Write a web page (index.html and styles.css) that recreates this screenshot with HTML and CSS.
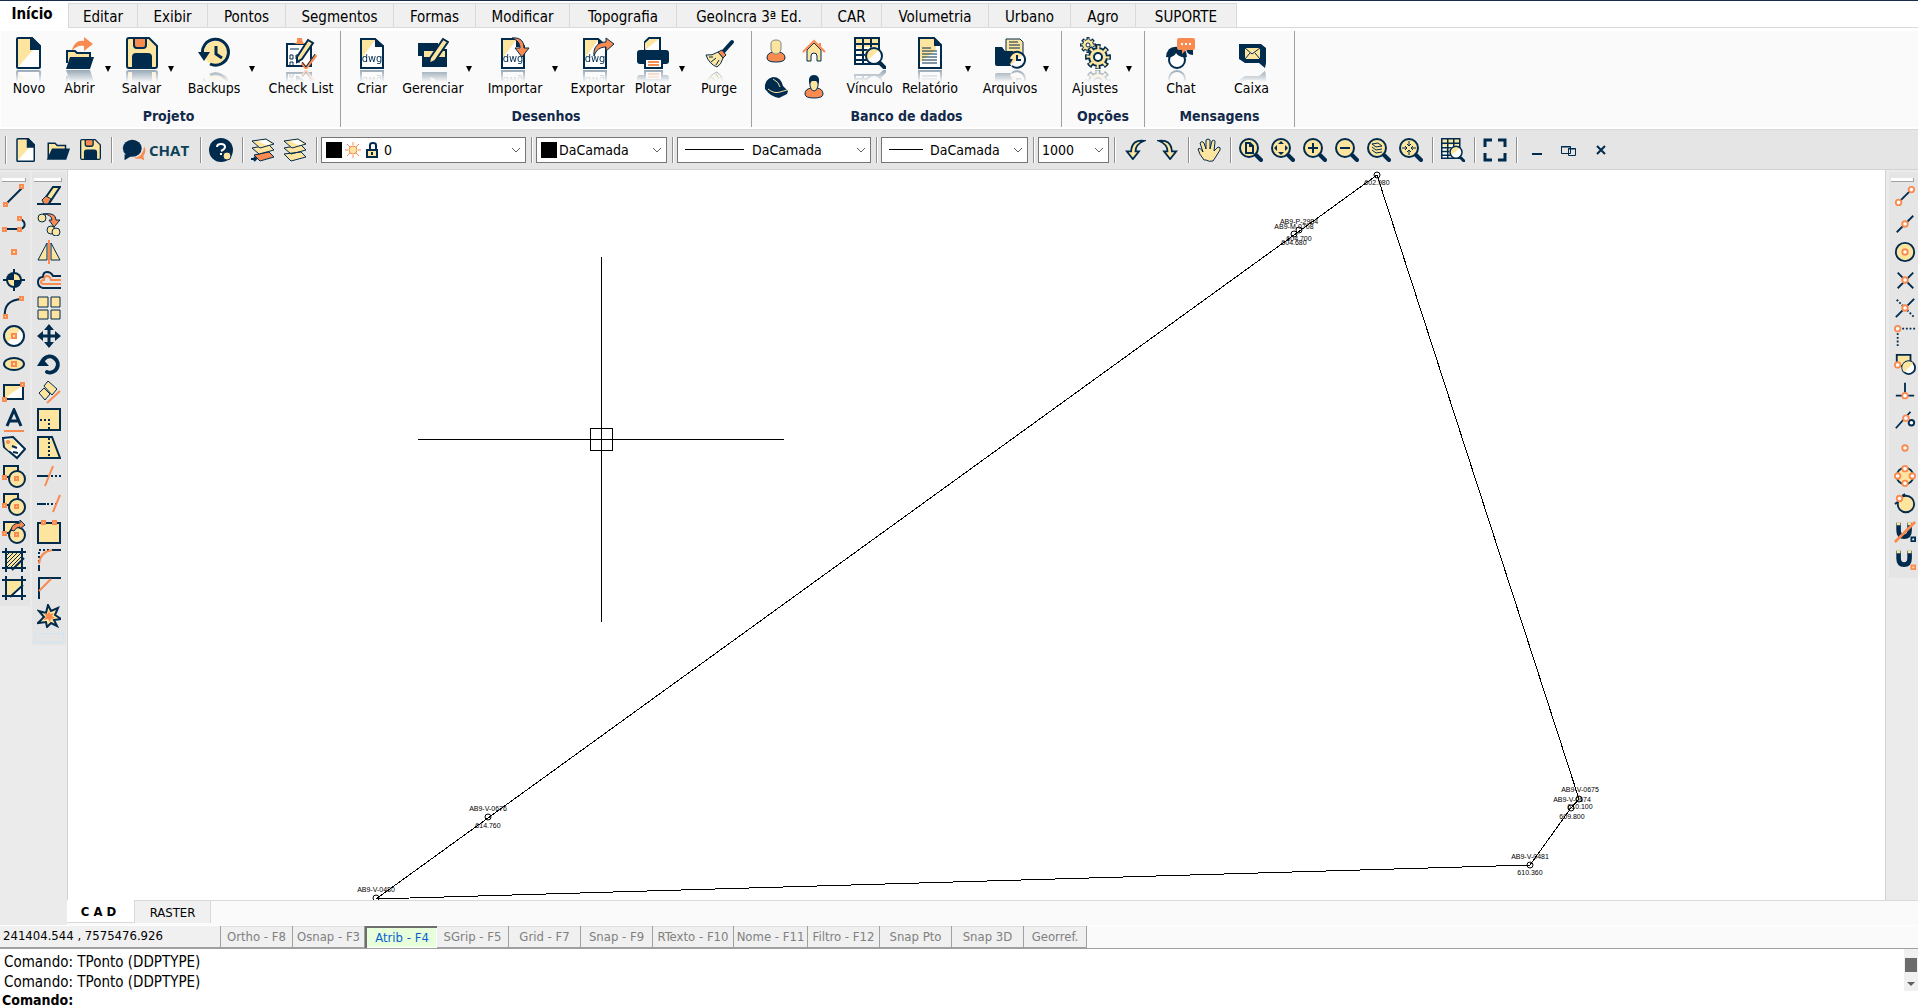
FILE: index.html
```html
<!DOCTYPE html>
<html lang="pt-BR">
<head>
<meta charset="utf-8">
<title>CAD Topografia</title>
<link rel="stylesheet" href="styles.css">
</head>
<body>
<svg class="sprite" aria-hidden="true">
  <defs>
    <symbol id="page" viewBox="0 0 32 32"><path class="w" d="M5 1h14l8 8v22H5z"/><path class="c" d="M5 1h16v11L5 30z"/><path class="ln" d="M5 1h14l8 8v21q0 1-1 1H5q-1 0-1-1V2q0-1 1-1z"/><path class="n" d="M17 0h2l9 9v4H17z"/></symbol>
    <symbol id="folder" viewBox="0 0 32 32"><path class="c s" d="M3 27V7h9l3 3h11v8"/><path class="n" d="M8 14h24l-5 15H1z"/></symbol>
    <symbol id="open" viewBox="0 0 32 32"><path class="o" d="M8 14C9 6 15 3 20 4V0l9 7-9 7v-5c-5-1-9 1-12 5z"/><path class="c s" d="M3 26V14h8l2 2h13v5"/><path class="n" d="M6 20h24l-4 12H2z"/></symbol>
    <symbol id="save" viewBox="0 0 32 32"><path class="c ln" d="M3 1h20l8 8v20q0 2-2 2H3q-2 0-2-2V3q0-2 2-2z"/><path class="o s" d="M8 1h12v7q0 3-3 3h-6q-3 0-3-3z"/><path class="n" d="M6 31V20q0-4 4-4h12q4 0 4 4v11z"/></symbol>
    <symbol id="clock" viewBox="0 0 32 32"><circle class="c" cx="18" cy="16" r="12"/><path class="l3" d="M5 19A13 13 0 1 1 12 27M18 9v8l6 4"/><path class="n" d="M0 15h12l-6 9z"/></symbol>
    <symbol id="check" viewBox="0 0 32 32"><path class="w s" d="M2 7h24v22H2z"/><path class="o" d="M8 7q5 0 4-6h5q0 6 5 6z"/><path class="s2" d="M5 12h9M5 18h3v4H5zM11 18h3v4h-3zM5 25h3v4H5zM11 25h4"/><path class="c s" d="M12 20L23 3l5 3-11 16-5 3z"/><path class="lo3" d="M17 26l4 5L31 18"/><path class="s2" d="M17 25l4 5 9-13"/></symbol>
    <symbol id="dwg" viewBox="0 0 32 32"><path class="w" d="M5 2h14l8 8v21H5z"/><path class="c" d="M5 2h15L5 22z"/><path class="s" d="M5 2h14l8 7v22H5z"/><path class="n" d="M19 1l9 9h-9z"/><text class="dwg" x="16" y="25" text-anchor="middle">dwg</text></symbol>
    <symbol id="manage" viewBox="0 0 32 32"><path class="n" d="M1 6h20v13H1z"/><path class="c s" d="M6 13h23v8H6z"/><path class="n" d="M5 22h25v8H5z"/><path class="c s" d="M13 21L26 2l5 3-13 19-6 3z"/><path class="s2" d="M9 27h6"/></symbol>
    <symbol id="arrowin" viewBox="0 0 32 32"><use href="#dwg" width="32" height="32" x="-2"/><path class="o s2" d="M13 1c9-1 12 4 12 10h5l-7 9-7-9h5c0-5-3-8-8-10z"/></symbol>
    <symbol id="arrowout" viewBox="0 0 32 32"><use href="#dwg" width="32" height="32" x="-3"/><path class="o s2" d="M12 19c-1-9 4-14 12-14V1l8 6-8 7v-4c-6 0-10 3-12 9z"/></symbol>
    <symbol id="print" viewBox="0 0 32 32"><path class="w s" d="M8 14V5l4-4h11v13z"/><path class="c" d="M8 13V6l5-4h9z"/><path class="n" d="M3 13h26q3 0 3 3v8q0 3-3 3H3q-3 0-3-3v-8q0-3 3-3z"/><path class="w s" d="M8 22h17v9H8z"/><path class="lo" d="M11 25h11M11 28h11"/></symbol>
    <symbol id="broom" viewBox="0 0 32 32"><path class="l4" d="M29 5L20 15"/><path class="o s2" d="M15 15l4-2 4 5-3 3z"/><path class="c s2" d="M3 18q6 1 12-3l5 6q-2 7-6 9-8-3-11-12z"/><path class="s2" d="M6 20l4 0M8 25l5-4M13 28l3-5"/></symbol>
    <symbol id="table" viewBox="0 0 32 32"><path class="c" d="M1 1h24v9H1z"/><path class="w" d="M1 10h24v17H1z"/><path class="c" d="M1 1h8v22z"/><path class="s" d="M1 1h24v26H1zM1 7h24M1 13h24M1 18h24M1 23h24M9 1v26M17 1v26"/><circle class="w" cx="20" cy="19" r="8"/><path class="c" d="M13 24a8 8 0 0 1 12-11z"/><circle class="s" cx="20" cy="19" r="8"/><path class="l4" d="M26 26l5 5"/></symbol>
    <symbol id="report" viewBox="0 0 32 32"><path class="w" d="M5 1h17l5 5v25H5z"/><path class="c" d="M5 1h17v12L5 26z"/><path class="ln" d="M5 1h15l7 7v23H5z"/><path class="n" d="M20 0l8 9h-8z"/><path class="s2" d="M8 11h9M8 14h15M8 17h15M8 20h15M8 23h15M8 26h15"/></symbol>
    <symbol id="files" viewBox="0 0 32 32"><path class="c s2" d="M12 12V2h14l3 3v12H12z"/><path class="s2" d="M15 5h9M15 8h11M15 11h11"/><path class="n" d="M1 10h7l3 4h8v15H3q-2 0-2-2z"/><circle class="w" cx="23" cy="23" r="8"/><path class="c" d="M17 28a8 8 0 0 1 12-11z"/><path class="s" d="M15 23a8 8 0 1 1 3 6M23 18v5h4"/><path class="n" d="M12 22h7l-3 5z"/></symbol>
    <symbol id="gears" viewBox="0 0 32 32"><circle class="g1" cx="9" cy="8" r="6" pathLength="80"/><circle class="n" cx="9" cy="8" r="6"/><circle class="g2" cx="9" cy="8" r="5" pathLength="80"/><circle class="c" cx="9" cy="8" r="5"/><circle class="w s2" cx="9" cy="8" r="2"/><circle class="g3" cx="19" cy="20" r="10" pathLength="80"/><circle class="n" cx="19" cy="20" r="10"/><circle class="g4" cx="19" cy="20" r="9" pathLength="80"/><circle class="c" cx="19" cy="20" r="8"/><circle class="w s" cx="19" cy="20" r="4"/></symbol>
    <symbol id="talk" viewBox="0 0 32 32"><path class="n" d="M20 8q9-1 8 7v3q-4 0-6-3z"/><circle class="w s" cx="12" cy="23" r="8"/><path class="n" d="M1 20Q2 8 14 10q8 2 8 10-8 1-11-4-2 5-10 4z"/><path class="o" d="M14 1h14q2 0 2 2v8q0 2-2 2h-7l-4 4v-4h-3q-2 0-2-2V3q0-2 2-2z"/><path class="dots" d="M16 7h10"/></symbol>
    <symbol id="mailbox" viewBox="0 0 32 32"><path class="n" d="M3 7h22l5 4v15l-1 5-6-5H9l-6-4z"/><path class="c" d="M9 11h15v11H9z"/><path class="s2" d="M9 11l7 6 8-6M9 22l5-6M24 22l-5-6"/></symbol>
    <symbol id="person" viewBox="0 0 24 24"><path class="o s2" d="M3 19q0-5 6-6h6q6 1 6 6 0 4-9 4t-9-4z"/><path class="c sg" d="M7 5q0-4 5-4t5 4v5q-1 5-5 5t-5-5z"/></symbol>
    <symbol id="worker" viewBox="0 0 24 24"><path class="o s2" d="M3 19q0-5 6-6h6q6 1 6 6 0 4-9 4t-9-4z"/><path class="c s2" d="M8 5h8v6q-1 5-4 5t-4-5z"/><path class="n" d="M7 9V4q1-4 5-4t5 4v5l-3-3h-4z"/></symbol>
    <symbol id="house" viewBox="0 0 24 24"><path class="c s2" d="M5 11v11h4v-5q0-3 3-3t3 3v5h4V11l-7-7z"/><path class="lo" d="M1 13L12 2l11 11M18 4v4"/></symbol>
    <symbol id="helmet" viewBox="0 0 24 24"><path class="n" d="M1 14Q0 4 9 2q8 0 10 9l5 5-1 3-8 4q-8-1-14-9z"/><path class="lc" d="M4 14q6 5 12 3l7-2M9 4q6 3 7 8"/></symbol>
    <symbol id="bubbles" viewBox="0 0 28 28"><path class="o" d="M14 23q10 0 12-13 3 6-1 11l1 5-5-2q-4 1-7-1z"/><ellipse class="n" cx="12" cy="12" rx="11" ry="10"/><path class="n" d="M3 19l0 7 8-5z"/></symbol>
    <symbol id="help" viewBox="0 0 24 24"><circle class="n" cx="12" cy="12" r="12"/><path class="lw" d="M8 9q0-3 4-3t4 3q0 2-4 4M12 15v2"/><circle class="c s2" cx="18" cy="18" r="4"/><path class="lc" d="M21 21l3 3"/></symbol>
    <symbol id="layers" viewBox="0 0 24 24"><path class="c s2" d="M1 16l7 7 15-4-5-5zM1 10l7 6 15-4-5-5z"/><path class="c s2" d="M1 3l14-2 8 5-14 4z"/><path class="w" d="M7 3l8-1 5 4-5 1z"/></symbol>
    <symbol id="layers1" viewBox="0 0 24 24"><path class="o s2" d="M3 17l6 6 14-4-5-5z"/><path class="c s2" d="M1 10l7 6 15-4-5-5z"/><path class="c s2" d="M1 3l14-2 8 5-14 4z"/><path class="w" d="M7 3l8-1 5 4-5 1z"/><path class="s" d="M0 21h5M3 19l2 2-2 2"/></symbol>
    <symbol id="sun" viewBox="0 0 16 16"><path class="los" d="M8 0v3M8 13v3M0 8h3M13 8h3M2 2l3 3M14 2l-3 3M2 14l3-3M14 14l-3-3"/><circle class="c los" cx="8" cy="8" r="4"/></symbol>
    <symbol id="lock" viewBox="0 0 16 16"><path class="s" d="M6 8V3q0-2 3-2t3 2v4"/><path class="c s" d="M3 8h10v7H3z"/><path class="s" d="M8 10v3"/></symbol>
    <symbol id="undo" viewBox="0 0 24 24"><path class="c s" d="M22 2Q8 0 7 14H2l7 9 7-9h-4Q12 6 22 2z"/></symbol>
    <symbol id="hand" viewBox="0 0 24 24"><path class="c s2" d="M7 22Q2 16 1 11q2-2 5 3L3 5q2-3 4 0l2 6V2q2-2 4 0v9l2-8q3-2 3 1l-1 9 4-4q3 0 2 3l-5 8-2 3q-4 1-7-1z"/></symbol>
    <symbol id="lens" viewBox="0 0 24 24"><circle class="c" cx="10" cy="10" r="9"/><circle class="ln" cx="10" cy="10" r="9"/><path class="l4" d="M17 17l5 5"/></symbol>
    <symbol id="zpage" viewBox="0 0 24 24"><use href="#lens"/><path class="s" d="M7 5h4l3 3v7H7zM11 5v3h3"/></symbol>
    <symbol id="zext" viewBox="0 0 24 24"><use href="#lens"/><path class="n" d="M10 3l3 3H7zM10 17l3-3H7zM3 10l3-3v6zM17 10l-3-3v6z"/></symbol>
    <symbol id="zin" viewBox="0 0 24 24"><use href="#lens"/><path class="ln" d="M5 10h10M10 5v10"/></symbol>
    <symbol id="zout" viewBox="0 0 24 24"><use href="#lens"/><path class="ln" d="M5 10h10"/></symbol>
    <symbol id="zlay" viewBox="0 0 24 24"><use href="#lens"/><path class="s2" d="M5 6l6-1 4 3-6 1zM5 9l4 3 6-1M5 12l4 3 6-1"/></symbol>
    <symbol id="zall" viewBox="0 0 24 24"><use href="#lens"/><path class="s2" d="M10 3v5M10 12v5M3 10h5M12 10h5M8 6l2 2 2-2M8 14l2-2 2 2M6 8l2 2-2 2M14 8l-2 2 2 2"/></symbol>
    <symbol id="full" viewBox="0 0 24 24"><path class="l3" d="M2 9V2h7M15 2h7v7M22 15v7h-7M9 22H2v-7"/></symbol>
    <symbol id="min" viewBox="0 0 24 24"><path class="s" d="M7 16h10"/></symbol>
    <symbol id="restore" viewBox="0 0 24 24"><path class="s2" d="M4.500 8.500h9v7h-9zM11.500 10.500h7v7h-7zM4 9h10M11 11h8"/></symbol>
    <symbol id="close" viewBox="0 0 24 24"><path class="s" d="M8 8l8 8M16 8l-8 8"/></symbol>
    <symbol id="chev" viewBox="0 0 10 10"><path class="sc" d="M1 3l4 4 4-4"/></symbol>

    <symbol id="line" viewBox="0 0 24 24"><path class="ln" d="M4 20L20 4"/><path class="sq" d="M2 19h3v3H2zM18 1h3v3h-3z"/></symbol>
    <symbol id="poly" viewBox="0 0 24 24"><path class="ln" d="M2 17h17q5-2 3-7l-3-3"/><path class="sq" d="M1 16h3v3H1zM16 5h3v3h-3zM16 16h3v3h-3z"/></symbol>
    <symbol id="pt" viewBox="0 0 24 24"><path class="sq" d="M10 10h4v4h-4z"/></symbol>
    <symbol id="target" viewBox="0 0 24 24"><circle class="n" cx="12" cy="12" r="8"/><path class="c" d="M12 12V6a6 6 0 0 1 6 6zM12 12v6a6 6 0 0 1-6-6z"/><path class="s" d="M1 12h4M19 12h4M12 1v4M12 19v4"/></symbol>
    <symbol id="arc" viewBox="0 0 24 24"><path class="ln" d="M3 21Q1 4 20 3"/><path class="sq" d="M2 19h3v3H2zM18 1h3v3h-3z"/></symbol>
    <symbol id="circle" viewBox="0 0 24 24"><circle class="w" cx="12" cy="12" r="10"/><path class="c" d="M5 19A10 10 0 0 1 19 5z"/><circle class="ln" cx="12" cy="12" r="10"/><path class="sq" d="M10 10h4v4h-4z"/></symbol>
    <symbol id="ellipse" viewBox="0 0 24 24"><ellipse class="c" cx="12" cy="12" rx="10" ry="6"/><ellipse class="ln" cx="12" cy="12" rx="10" ry="6"/><path class="sq" d="M10 10h4v4h-4z"/></symbol>
    <symbol id="rect" viewBox="0 0 24 24"><path class="w" d="M2 5h19v14H2z"/><path class="c" d="M2 5h19L2 19z"/><path class="ln" d="M2 5h19v14H2z"/><path class="sq" d="M1 18h3v3H1zM19 3h3v3h-3z"/></symbol>
    <symbol id="text" viewBox="0 0 24 24"><path class="l3" d="M5 18L12 2l7 16M8 13h8"/><path class="lo" d="M2 23h20"/></symbol>
    <symbol id="tag" viewBox="0 0 24 24"><path class="w s" d="M1 2l10-1 12 12-8 9L2 11z"/><path class="c" d="M3 4l8-1 5 5-9 7-4-4z"/><path class="ln" d="M10 10l5 2M11 16l5 1"/><circle class="o" cx="6" cy="6" r="2"/></symbol>
    <symbol id="shapes" viewBox="0 0 24 24"><path class="c s" d="M2 2h14v11H2z"/><circle class="c s" cx="15" cy="15" r="8"/><path class="sq" d="M1 12h3v3H1zM13 13h3v3h-3z"/></symbol>
    <symbol id="shapesx" viewBox="0 0 24 24"><use href="#shapes"/><path class="o s2" d="M9 10q1-7 9-7V0l5 5-5 4V7q-4 0-6 4z"/></symbol>
    <symbol id="crop" viewBox="0 0 24 24"><path class="w" d="M4 4h16v16H4z"/><path class="c" d="M4 4h16v4L8 20H4z"/><path class="ln" d="M0 4h24M0 20h24M4 0v24M20 0v24M8 21L21 9"/></symbol>
    <symbol id="hatch" viewBox="0 0 24 24"><path class="c" d="M4 4h16v16H4z"/><path class="s2" d="M4 8l4-4M4 12l8-8M4 16L16 4M4 20L20 4M8 20L20 8M12 20l8-8"/><path class="ln" d="M0 4h24M0 20h24M4 0v24M20 0v24M10 22L22 10"/></symbol>
    <symbol id="erase" viewBox="0 0 24 24"><path class="s" d="M0 20h24"/><path class="c s" d="M9 13l7-10h7L13 18z"/><path class="o s2" d="M9 12l5 3-3 5H7l-2-4z"/></symbol>
    <symbol id="copy" viewBox="0 0 24 24"><circle class="c s2" cx="5" cy="6" r="4"/><circle class="c s2" cx="14" cy="18" r="4"/><circle class="c s2" cx="19" cy="20" r="4"/><path class="o s2" d="M6 2q13-2 13 6h4l-6 7-5-7h3q-1-6-9-6z"/></symbol>
    <symbol id="mirror" viewBox="0 0 24 24"><path class="c s2" d="M10 3v17H1zM14 3v17h9z"/><path class="lo" d="M12 0v24"/></symbol>
    <symbol id="offset" viewBox="0 0 24 24"><path class="ln" d="M24 8h-8q-2-4-6-4T6 9q-5 0-5 5t5 6h18"/><path class="lo1" d="M24 12H14q-1-4-4-4t-3 4q-3 0-3 2t3 2h17"/></symbol>
    <symbol id="array" viewBox="0 0 24 24"><path class="c s2" d="M1 1h10v10H1zM14 1h9v10h-9zM1 14h10v9H1zM14 14h9v9h-9z"/></symbol>
    <symbol id="move" viewBox="0 0 24 24"><path class="l3" d="M12 4v16M4 12h16"/><path class="n" d="M12 0l5 6H7zM12 24l5-6H7zM0 12l6-5v10zM24 12l-6-5v10z"/></symbol>
    <symbol id="rotate" viewBox="0 0 24 24"><path class="l4" d="M7 7A8 8 0 1 1 10 20"/><path class="n" d="M0 14L5 6l7 8z"/></symbol>
    <symbol id="align" viewBox="0 0 24 24"><path class="c s2" d="M2 13l5-5 6 6-5 6zM7 6l4-5 9 8-5 6z"/><path class="lo" d="M10 23L23 11"/></symbol>
    <symbol id="scale" viewBox="0 0 24 24"><path class="c s" d="M1 1h22v21H1z"/><path class="da" d="M3 12h9v9"/></symbol>
    <symbol id="stretch" viewBox="0 0 24 24"><path class="c s" d="M1 1h14l8 21H1z"/><path class="da" d="M12 2v20"/></symbol>
    <symbol id="trim" viewBox="0 0 24 24"><path class="s" d="M0 12h12"/><path class="da" d="M14 12h10"/><path class="lo" d="M8 22L16 2"/></symbol>
    <symbol id="extend" viewBox="0 0 24 24"><path class="s" d="M0 12h9"/><path class="da" d="M10 12h9"/><path class="lo" d="M16 20L23 3"/></symbol>
    <symbol id="break" viewBox="0 0 24 24"><path class="c s" d="M1 3h22v20H1z"/><path class="sq" d="M5 1h3v3H5zM16 1h3v3h-3z"/></symbol>
    <symbol id="fillet" viewBox="0 0 24 24"><path class="da" d="M2 14V2h12"/><path class="ln" d="M2 23v-6M15 2h9"/><path class="lo" d="M2 16Q3 4 15 2"/></symbol>
    <symbol id="chamfer" viewBox="0 0 24 24"><path class="ln" d="M2 23V2h22"/><path class="lo" d="M2 15L14 3"/></symbol>
    <symbol id="burst" viewBox="0 0 24 24"><path class="c s" d="M11 1l3 6 7-3-3 7 6 4-7 1 3 6-6-3-4 4-1-5-8 1 6-6-5-6 7 2z"/><path class="o" d="M12 6l1 4 4-1-2 3 3 2-4 1-1 3-2-3-4 1 2-4-2-3 4 1z"/></symbol>

    <symbol id="r-end" viewBox="0 0 24 24"><path class="s" d="M5 19L19 5"/><circle class="so" cx="5" cy="19" r="3"/><circle class="so" cx="19" cy="5" r="3"/></symbol>
    <symbol id="r-mid" viewBox="0 0 24 24"><path class="s" d="M3 21L21 3"/><circle class="so" cx="12" cy="12" r="3"/></symbol>
    <symbol id="r-cen" viewBox="0 0 24 24"><circle class="c s" cx="12" cy="12" r="10"/><circle class="so" cx="12" cy="12" r="3"/></symbol>
    <symbol id="r-int" viewBox="0 0 24 24"><path class="s" d="M4 4l17 17M21 4L4 21"/><circle class="so" cx="12" cy="12" r="3"/></symbol>
    <symbol id="r-app" viewBox="0 0 24 24"><path class="da" d="M3 3l19 19"/><path class="s" d="M22 2L2 22"/><circle class="so" cx="12" cy="12" r="3"/></symbol>
    <symbol id="r-ext" viewBox="0 0 24 24"><path class="da" d="M9 4h15M4 9v15"/><circle class="so" cx="4" cy="4" r="3"/></symbol>
    <symbol id="r-ins" viewBox="0 0 24 24"><path class="c s" d="M3 2h15v12H3z"/><circle class="w s" cx="16" cy="16" r="7"/><path class="c" d="M11 21A7 7 0 0 1 21 11z"/><circle class="so" cx="4" cy="13" r="3"/></symbol>
    <symbol id="r-per" viewBox="0 0 24 24"><path class="s" d="M2 16h20M12 2v14"/><circle class="so" cx="12" cy="16" r="3"/></symbol>
    <symbol id="r-tan" viewBox="0 0 24 24"><path class="s" d="M2 21L18 3"/><circle class="w s" cx="19" cy="15" r="3"/><circle class="so" cx="13" cy="10" r="3"/></symbol>
    <symbol id="r-node" viewBox="0 0 24 24"><circle class="so" cx="12" cy="12" r="3"/></symbol>
    <symbol id="r-qua" viewBox="0 0 24 24"><circle class="c s" cx="12" cy="12" r="9"/><circle class="so" cx="12" cy="4" r="3"/><circle class="so" cx="12" cy="20" r="3"/><circle class="so" cx="4" cy="12" r="3"/><circle class="so" cx="20" cy="12" r="3"/></symbol>
    <symbol id="r-near" viewBox="0 0 24 24"><circle class="c s" cx="13" cy="12" r="9"/><path class="s" d="M1 12l4-3M9 3l3-2"/><circle class="so" cx="6" cy="6" r="3"/></symbol>
    <symbol id="r-mag" viewBox="0 0 24 24"><path class="l5" d="M5 2v8q0 7 6 7t6-7V2"/><path class="lc3" d="M3 3h4M15 3h4"/><path class="sq" d="M19 18h4v4h-4z"/></symbol>
    <symbol id="r-off" viewBox="0 0 24 24"><path class="l5" d="M5 2v8q0 7 6 7t6-7V2"/><path class="lc3" d="M3 3h4M15 3h4"/><path class="w s" d="M19 18h4v4h-4z"/><path class="lo3" d="M1 23L23 1"/></symbol>
  </defs>
</svg>

<header class="top">
  <nav class="tabs" aria-label="Menu">
    <button class="tab on">Início</button><button class="tab">Editar</button><button class="tab">Exibir</button><button class="tab">Pontos</button><button class="tab">Segmentos</button><button class="tab">Formas</button><button class="tab">Modificar</button><button class="tab">Topografia</button><button class="tab">GeoIncra 3ª Ed.</button><button class="tab">CAR</button><button class="tab">Volumetria</button><button class="tab">Urbano</button><button class="tab">Agro</button><button class="tab">SUPORTE</button>
  </nav>
  <div class="ribbon">
    <section class="group g-projeto">
      <div class="items">
        <button class="big"><span class="ic"><svg><use href="#page"/></svg></span>Novo</button>
        <button class="big"><span class="ic"><svg><use href="#open"/></svg></span>Abrir</button>
        <button class="drop" aria-label="Mais opções de Abrir"></button>
        <button class="big"><span class="ic"><svg><use href="#save"/></svg></span>Salvar</button>
        <button class="drop" aria-label="Mais opções de Salvar"></button>
        <button class="big"><span class="ic"><svg><use href="#clock"/></svg></span>Backups</button>
        <button class="drop" aria-label="Mais opções de Backups"></button>
        <button class="big"><span class="ic"><svg><use href="#check"/></svg></span>Check List</button>
      </div>
      <h2>Projeto</h2>
    </section>
    <section class="group g-desenhos">
      <div class="items">
        <button class="big"><span class="ic"><svg><use href="#dwg"/></svg></span>Criar</button>
        <button class="big"><span class="ic"><svg><use href="#manage"/></svg></span>Gerenciar</button>
        <button class="drop" aria-label="Mais opções de Gerenciar"></button>
        <button class="big"><span class="ic"><svg><use href="#arrowin"/></svg></span>Importar</button>
        <button class="drop" aria-label="Mais opções de Importar"></button>
        <button class="big"><span class="ic"><svg><use href="#arrowout"/></svg></span>Exportar</button>
        <button class="big"><span class="ic"><svg><use href="#print"/></svg></span>Plotar</button>
        <button class="drop" aria-label="Mais opções de Plotar"></button>
        <button class="big"><span class="ic"><svg><use href="#broom"/></svg></span>Purge</button>
      </div>
      <h2>Desenhos</h2>
    </section>
    <section class="group g-banco">
      <div class="items">
        <div class="small">
          <button aria-label="Proprietário"><svg><use href="#person"/></svg></button>
          <button aria-label="Imóvel"><svg><use href="#house"/></svg></button>
          <button aria-label="Responsável"><svg><use href="#helmet"/></svg></button>
          <button aria-label="Técnico"><svg><use href="#worker"/></svg></button>
        </div>
        <button class="big"><span class="ic"><svg><use href="#table"/></svg></span>Vínculo</button>
        <button class="big"><span class="ic"><svg><use href="#report"/></svg></span>Relatório</button>
        <button class="drop" aria-label="Mais opções de Relatório"></button>
        <button class="big"><span class="ic"><svg><use href="#files"/></svg></span>Arquivos</button>
        <button class="drop" aria-label="Mais opções de Arquivos"></button>
      </div>
      <h2>Banco de dados</h2>
    </section>
    <section class="group g-opcoes">
      <div class="items">
        <button class="big"><span class="ic"><svg><use href="#gears"/></svg></span>Ajustes</button>
        <button class="drop" aria-label="Mais opções de Ajustes"></button>
      </div>
      <h2>Opções</h2>
    </section>
    <section class="group g-mensagens">
      <div class="items">
        <button class="big"><span class="ic"><svg><use href="#talk"/></svg></span>Chat</button>
        <button class="big"><span class="ic"><svg><use href="#mailbox"/></svg></span>Caixa</button>
      </div>
      <h2>Mensagens</h2>
    </section>
  </div>
</header>

<div class="toolbar" role="toolbar" aria-label="Barra padrão">
  <i class="sep grip"></i>
  <button class="tb" aria-label="Novo"><svg><use href="#page"/></svg></button>
  <button class="tb" aria-label="Abrir"><svg><use href="#folder"/></svg></button>
  <button class="tb save" aria-label="Salvar"><svg><use href="#save"/></svg></button>
  <i class="sep"></i>
  <button class="chat"><svg><use href="#bubbles"/></svg>CHAT</button>
  <i class="sep"></i>
  <button class="tb" aria-label="Ajuda"><svg><use href="#help"/></svg></button>
  <i class="sep"></i>
  <button class="tb" aria-label="Camada atual"><svg><use href="#layers1"/></svg></button>
  <button class="tb" aria-label="Camadas"><svg><use href="#layers"/></svg></button>
  <i class="sep"></i>
  <div class="combo c-layer"><i class="swatch"></i><svg class="mini"><use href="#sun"/></svg><svg class="mini"><use href="#lock"/></svg><select aria-label="Camada"><option>0</option></select><svg class="chev"><use href="#chev"/></svg></div>
  <i class="sep"></i>
  <div class="combo c-color"><i class="swatch"></i><select aria-label="Cor"><option>DaCamada</option></select><svg class="chev"><use href="#chev"/></svg></div>
  <i class="sep"></i>
  <div class="combo c-type"><i class="rule"></i><select aria-label="Tipo de linha"><option>DaCamada</option></select><svg class="chev"><use href="#chev"/></svg></div>
  <i class="sep"></i>
  <div class="combo c-weight"><i class="rule"></i><select aria-label="Espessura"><option>DaCamada</option></select><svg class="chev"><use href="#chev"/></svg></div>
  <i class="sep"></i>
  <div class="combo c-scale"><select aria-label="Escala"><option>1000</option></select><svg class="chev"><use href="#chev"/></svg></div>
  <i class="sep"></i>
  <button class="tb sm" aria-label="Desfazer"><svg><use href="#undo"/></svg></button>
  <button class="tb sm flip" aria-label="Refazer"><svg><use href="#undo"/></svg></button>
  <i class="sep"></i>
  <button class="tb" aria-label="Mover vista"><svg><use href="#hand"/></svg></button>
  <i class="sep"></i>
  <button class="tb" aria-label="Zoom página"><svg><use href="#zpage"/></svg></button>
  <button class="tb" aria-label="Zoom extensão"><svg><use href="#zext"/></svg></button>
  <button class="tb" aria-label="Mais zoom"><svg><use href="#zin"/></svg></button>
  <button class="tb" aria-label="Menos zoom"><svg><use href="#zout"/></svg></button>
  <button class="tb" aria-label="Zoom camada"><svg><use href="#zlay"/></svg></button>
  <button class="tb" aria-label="Zoom centro"><svg><use href="#zall"/></svg></button>
  <i class="sep"></i>
  <button class="tb" aria-label="Pesquisar tabela"><svg><use href="#table"/></svg></button>
  <i class="sep"></i>
  <button class="tb" aria-label="Tela cheia"><svg><use href="#full"/></svg></button>
  <i class="sep"></i>
  <button class="tb" aria-label="Minimizar"><svg><use href="#min"/></svg></button>
  <button class="tb" aria-label="Restaurar"><svg><use href="#restore"/></svg></button>
  <button class="tb" aria-label="Fechar"><svg><use href="#close"/></svg></button>
</div>

<main class="work">
  <div class="side draw" role="toolbar" aria-label="Desenhar">
    <button aria-label="Linha"><svg><use href="#line"/></svg></button>
    <button aria-label="Polilinha"><svg><use href="#poly"/></svg></button>
    <button aria-label="Ponto"><svg><use href="#pt"/></svg></button>
    <button aria-label="Alvo"><svg><use href="#target"/></svg></button>
    <button aria-label="Arco"><svg><use href="#arc"/></svg></button>
    <button aria-label="Círculo"><svg><use href="#circle"/></svg></button>
    <button aria-label="Elipse"><svg><use href="#ellipse"/></svg></button>
    <button aria-label="Retângulo"><svg><use href="#rect"/></svg></button>
    <button aria-label="Texto"><svg><use href="#text"/></svg></button>
    <button aria-label="Atributo"><svg><use href="#tag"/></svg></button>
    <button aria-label="Criar bloco"><svg><use href="#shapes"/></svg></button>
    <button aria-label="Inserir bloco"><svg><use href="#shapes"/></svg></button>
    <button aria-label="Exportar bloco"><svg><use href="#shapesx"/></svg></button>
    <button aria-label="Hachura"><svg><use href="#hatch"/></svg></button>
    <button aria-label="Recorte"><svg><use href="#crop"/></svg></button>
  </div>
  <div class="side modify" role="toolbar" aria-label="Modificar">
    <button aria-label="Apagar"><svg><use href="#erase"/></svg></button>
    <button aria-label="Copiar"><svg><use href="#copy"/></svg></button>
    <button aria-label="Espelhar"><svg><use href="#mirror"/></svg></button>
    <button aria-label="Paralela"><svg><use href="#offset"/></svg></button>
    <button aria-label="Matriz"><svg><use href="#array"/></svg></button>
    <button aria-label="Mover"><svg><use href="#move"/></svg></button>
    <button aria-label="Girar"><svg><use href="#rotate"/></svg></button>
    <button aria-label="Alinhar"><svg><use href="#align"/></svg></button>
    <button aria-label="Escalar"><svg><use href="#scale"/></svg></button>
    <button aria-label="Esticar"><svg><use href="#stretch"/></svg></button>
    <button aria-label="Aparar"><svg><use href="#trim"/></svg></button>
    <button aria-label="Estender"><svg><use href="#extend"/></svg></button>
    <button aria-label="Quebrar"><svg><use href="#break"/></svg></button>
    <button aria-label="Concordar"><svg><use href="#fillet"/></svg></button>
    <button aria-label="Chanfrar"><svg><use href="#chamfer"/></svg></button>
    <button aria-label="Explodir"><svg><use href="#burst"/></svg></button>
    <i class="hot"></i>
  </div>
  <div class="canvas">
    <svg class="drawing" role="img" aria-label="Desenho do perímetro">
      <g transform="translate(-68 -170)">
        <g class="geo">
          <path d="M376 899L1377 175L1579 799L1571 808L1530 865L376 899"/>
          <path d="M601 257V622M418 439H784M590 428H612V450H590z"/>
        </g>
        <g class="node">
          <circle cx="376" cy="898" r="3"/><circle cx="488" cy="817" r="3"/><circle cx="1294" cy="234" r="3"/><circle cx="1299" cy="230" r="3"/><circle cx="1377" cy="175" r="3"/><circle cx="1579" cy="799" r="3"/><circle cx="1571" cy="808" r="3"/><circle cx="1530" cy="865" r="3"/>
        </g>
        <g class="tag">
          <text x="1299" y="224">AB9-P-2984</text><text x="1294" y="229">AB9-M-0708</text><text x="1299" y="241">604.700</text><text x="1294" y="245">604.680</text><text x="1377" y="185">602.980</text>
          <text x="488" y="811">AB9-V-0676</text><text x="488" y="828">614.760</text><text x="376" y="892">AB9-V-0480</text>
          <text x="1580" y="792">AB9-V-0675</text><text x="1572" y="802">AB9-V-0674</text><text x="1580" y="809">610.100</text><text x="1572" y="819">609.800</text>
          <text x="1530" y="859">AB9-V-0481</text><text x="1530" y="875">610.360</text>
        </g>
      </g>
    </svg>
  </div>
  <div class="side snap" role="toolbar" aria-label="Osnap">
    <button aria-label="Extremo"><svg><use href="#r-end"/></svg></button>
    <button aria-label="Meio"><svg><use href="#r-mid"/></svg></button>
    <button aria-label="Centro"><svg><use href="#r-cen"/></svg></button>
    <button aria-label="Interseção"><svg><use href="#r-int"/></svg></button>
    <button aria-label="Interseção aparente"><svg><use href="#r-app"/></svg></button>
    <button aria-label="Extensão"><svg><use href="#r-ext"/></svg></button>
    <button aria-label="Inserção"><svg><use href="#r-ins"/></svg></button>
    <button aria-label="Perpendicular"><svg><use href="#r-per"/></svg></button>
    <button aria-label="Tangente"><svg><use href="#r-tan"/></svg></button>
    <button aria-label="Nó"><svg><use href="#r-node"/></svg></button>
    <button aria-label="Quadrante"><svg><use href="#r-qua"/></svg></button>
    <button aria-label="Próximo"><svg><use href="#r-near"/></svg></button>
    <button aria-label="Desligar snap"><svg><use href="#r-off"/></svg></button>
    <button aria-label="Configurar snap"><svg><use href="#r-mag"/></svg></button>
  </div>
</main>

<div class="views"><button class="view on">C A D</button><button class="view">RASTER</button></div>

<div class="status">
  <output class="coord">241404.544 , 7575476.926</output><button>Ortho - F8</button><button>Osnap - F3</button><button class="on">Atrib - F4</button><button>SGrip - F5</button><button>Grid - F7</button><button>Snap - F9</button><button>RTexto - F10</button><button>Nome - F11</button><button>Filtro - F12</button><button>Snap Pto</button><button>Snap 3D</button><button>Georref.</button>
</div>

<footer class="console">
  <div class="log"><p>Comando: TPonto (DDPTYPE)</p><p>Comando: TPonto (DDPTYPE)</p>
  <div class="prompt"><label for="cmd">Comando:</label><input id="cmd" type="text"></div></div>
  <div class="scroll" aria-hidden="true"><i class="thumb"></i><i class="down"></i></div>
</footer>
</body>
</html>
```
FILE: styles.css
```css
:root {
  --navy: #002b4d;
  --cream: #fde5a0;
  --orange: #f98b50;
  --edge: #d9d9d9;
  --gray: #a0a0a0;
}
* { box-sizing: border-box; }
body {
  margin: 0;
  min-height: 100vh;
  display: flex;
  flex-direction: column;
  background: #ebebeb;
  color: #000;
  font-family: "DejaVu Sans Condensed", "Noto Sans", sans-serif;
  font-size: 14px;
}
button, select, input { font: inherit; color: inherit; }
button { border: 0; padding: 0; margin: 0; background: none; white-space: nowrap; }
h2, p { margin: 0; }
i { display: block; }
svg { display: block; }
.sprite { position: absolute; width: 0; height: 0; }

/* icon paints */
.n { fill: var(--navy); }
.c { fill: var(--cream); }
.w { fill: #fff; }
.o { fill: var(--orange); }
.s, .s2, .ln, .l3, .l4, .l5, .da { stroke: var(--navy); stroke-width: 2; }
.s:not(.c, .w, .o), .s2:not(.c, .w, .o), .ln:not(.c, .w, .o), .l3, .l4, .l5, .da { fill: none; }
.s2 { stroke-width: 1; }
.l3 { stroke-width: 3; }
.l4 { stroke-width: 4; stroke-linecap: round; }
.l5 { stroke-width: 5; }
.da { stroke-dasharray: 2 2; }
.sg { stroke: #7c8a86; stroke-width: 1; }
.lo, .lo1, .lo3, .los { stroke: var(--orange); stroke-width: 2; }
.lo, .lo1, .lo3, .los:not(.c) { fill: none; }
.lo3 { stroke-width: 3; }
.los { stroke-width: 1; }
.lc, .lc3 { fill: none; stroke: var(--cream); stroke-width: 1; }
.lc3 { stroke-width: 3; }
.lw { fill: none; stroke: #fff; stroke-width: 2; }
.sc { fill: none; stroke: #606060; stroke-width: 1; }
.sq { fill: var(--cream); stroke: var(--orange); stroke-width: 2; }
.so { fill: #fff; stroke: var(--orange); stroke-width: 2; }
.g1, .g2, .g3, .g4 { fill: none; stroke-dasharray: 6 4; stroke-dashoffset: 3; }
.g1 { stroke: var(--navy); stroke-width: 4; }
.g2 { stroke: var(--cream); stroke-width: 3; stroke-dasharray: 3 7; stroke-dashoffset: 1; }
.g3 { stroke: var(--navy); stroke-width: 6; }
.g4 { stroke: var(--cream); stroke-width: 5; stroke-dasharray: 3 7; stroke-dashoffset: 1; }
.dots { fill: none; stroke: #fff; stroke-width: 2; stroke-dasharray: 2 2; }
.dwg { font: 11px "DejaVu Sans Condensed", sans-serif; fill: var(--navy); }

/* menu tabs */
.top { background: #fff; border-top: 1px solid #1a2b50; border-bottom: 1px solid var(--edge); }
.tabs {
  display: grid;
  grid-template-columns: 69px 69px 70px 78px 108px 82px 94px 107px 145px 60px 107px 82px 65px 101px 1fr;
  height: 27px;
  padding-top: 2px;
  box-shadow: inset 0 -1px var(--edge);
  font-size: 15px;
}
.tab { background: #f0f0f0; border: 1px solid var(--edge); border-left: 0; padding-top: 2px; line-height: 20px; }
.tab.on { background: #fff; border-top: 0; border-bottom: 0; font-weight: bold; line-height: 18px; padding: 0 4px 3px 0; }

/* ribbon */
.ribbon { display: flex; margin: 3px 0 2px 1px; background: #fafafa; }
.group { border-right: 1px solid var(--gray); padding-top: 6px; height: 96px; }
.group h2 { font-size: 14px; line-height: 20px; color: #12294a; text-align: center; }
.items { display: grid; height: 69px; }
.g-projeto .items { grid-template-columns: 56px 45px 16px 47px 17px 64px 16px 78px; }
.g-projeto h2 { padding-right: 4px; }
.g-desenhos .items { grid-template-columns: 62px 60px 18px 68px 16px 65px 46px 16px 54px; padding-right: 5px; }
.g-banco .items { grid-template-columns: 89px 57px 64px 18px 60px 21px; }
.g-opcoes { padding-left: 5px; }
.g-opcoes .items { grid-template-columns: 56px 21px; }
.g-opcoes h2 { margin-left: -5px; }
.g-mensagens .items { grid-template-columns: 72px 69px; padding-right: 8px; }
.big { display: flex; flex-direction: column; align-items: center; gap: 9px; min-width: 0; line-height: 20px; }
.ic { width: 32px; height: 32px; -webkit-box-reflect: below 1px linear-gradient(transparent 62%, rgba(0, 0, 0, .4)); }
.ic svg { width: 32px; height: 32px; }
.drop { display: flex; justify-content: flex-start; padding: 29px 0 0 3px; }
.drop::before { content: ""; border: 3px solid transparent; border-top: 6px solid #000; border-bottom: 0; }
.small { display: grid; grid-template: 36px 28px / 38px 38px; padding-left: 5px; }
.small button { display: grid; place-items: start center; padding-top: 2px; }
.small svg { width: 24px; height: 24px; }

/* main toolbar */
.toolbar { display: flex; align-items: center; height: 40px; background: #e5e5e5; border-bottom: 1px solid #d2d2d2; }
.sep { flex: none; width: 10px; height: 26px; background: linear-gradient(90deg, transparent 5px, #8f8f8f 5px 6px, #fff 6px 7px, transparent 7px); }
.grip { height: 28px; }
.tb { flex: none; width: 32px; display: grid; place-items: center; }
.tb svg { width: 24px; height: 24px; }
.save svg, .sm svg { width: 21px; height: 21px; }
.flip svg { transform: scaleX(-1); }
.chat { flex: none; width: 79px; display: flex; align-items: center; gap: 3px; padding-left: 6px; font-weight: bold; font-family: "Open Sans", sans-serif; color: #0c4257; font-size: 15px; }
.chat svg { width: 24px; height: 24px; }
.combo { flex: none; display: flex; align-items: center; height: 26px; background: #fff; border: 1px solid #767676; padding: 0 4px; font-size: 14px; }
.combo select { flex: 1; min-width: 0; border: 0; padding: 0; background: none; appearance: none; height: 22px; }
.swatch { width: 16px; height: 16px; background: #000; flex: none; }
.mini { width: 16px; height: 16px; margin-left: 3px; flex: none; }
.chev { width: 10px; height: 10px; flex: none; }
.rule { height: 1px; background: #000; flex: none; }
.c-layer { width: 205px; }
.c-layer select { margin-left: 4px; }
.c-color { width: 131px; }
.c-color select { margin-left: 2px; }
.c-type { width: 194px; }
.c-type .rule { width: 59px; margin: 0 8px 0 3px; }
.c-weight { width: 147px; }
.c-weight .rule { width: 34px; margin: 0 7px 0 3px; }
.c-scale { width: 71px; padding-left: 3px; }

/* workspace */
.work { flex: 1; display: flex; min-height: 0; }
.side { flex: none; align-self: flex-start; margin-top: 2px; display: flex; flex-direction: column; padding-top: 6px; background: #e5e5e5; }
.side::before { content: ""; height: 3px; margin: 0 4px 0 2px; border: solid #a0a0a0; border-width: 0 1px 1px 0; background: #fff; }
.side button { height: 28px; display: grid; place-items: center; }
.side svg { width: 24px; height: 24px; }
.draw { width: 30px; padding-bottom: 4px; }
.draw button { padding-right: 2px; }
.modify { width: 34px; margin-left: 2px; padding-bottom: 2px; }
.hot { height: 10px; margin: 3px 2px 0; border: 1px solid #cfe6f7; }
.canvas { flex: 1; min-width: 0; margin-left: 1px; background: #fff; border: solid #d2d2d2; border-width: 0 1px; }
.drawing { width: 100%; height: 100%; min-height: 300px; }
.geo { fill: none; stroke: #000; stroke-width: 1; shape-rendering: crispEdges; }
.node { fill: none; stroke: #000; stroke-width: 1; }
.tag text { font: 7px "Liberation Sans", Arial, sans-serif; text-anchor: middle; }
.snap { width: 29px; margin-left: 3px; padding-bottom: 4px; }
.snap svg { width: 22px; height: 22px; }
.snap button { padding-left: 3px; }

/* view tabs */
.views { display: flex; height: 26px; padding-left: 67px; border-bottom: 1px solid #fff; background: linear-gradient(90deg, #ebebeb 67px, #fafafa 67px); font-size: 13px; }
.view { height: 23px; width: 76px; background: #f0f0f0; border: 1px solid var(--edge); border-width: 1px 1px 0 0; }
.view.on { width: 68px; background: #fff; border-width: 0 1px 1px 0; font-weight: bold; padding-right: 4px; }
.views::after { content: ""; flex: 1; height: 1px; background: var(--edge); }

/* status bar */
.status {
  display: grid;
  grid-template-columns: 221px 72px 72px 72px 72px 72px 72px 81px 74px 72px 72px 72px 63px;
  height: 23px;
  background: #fafafa;
  border-bottom: 1px solid var(--gray);
  font-size: 13px;
  line-height: 20px;
}
.coord { padding-left: 3px; }
.coord, .status button { background: #f0f0f0; border: solid var(--gray); border-width: 0 1px 1px 0; }
.status button { color: #808080; box-shadow: inset 0 1px #e0e0e0; }
.status .on { background: #e8ffdc; color: #0a5fd0; border: solid #6e6e6e; border-width: 2px 0 0 2px; box-shadow: inset -1px -1px #fff; }

/* command console */
.console { display: flex; justify-content: space-between; height: 59px; background: #fff; font-size: 15px; }
.log { flex: 1; padding: 3px 0 0 4px; }
.log p { line-height: 20px; }
.prompt { display: flex; font-size: 14px; font-weight: bold; height: 16px; line-height: 16px; margin-left: -2px; }
.prompt input { flex: 1; border: 0; outline: 0; padding: 0 4px; height: 16px; background: none; }
.scroll { width: 14px; height: 42px; display: flex; flex-direction: column; align-items: center; gap: 10px; background: #f0f0f0; padding-top: 9px; }
.thumb { width: 12px; height: 14px; background: #6b6b6b; }
.down { border: 4px solid transparent; border-bottom: 0; border-top-color: #606060; }
```
